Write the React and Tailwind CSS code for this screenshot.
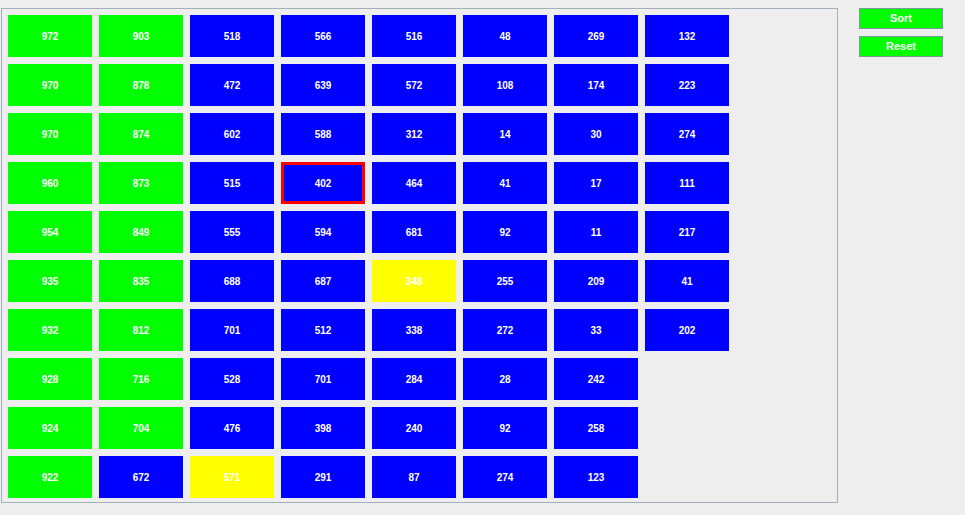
const columns = [
  [972, 970, 970, 960, 954, 935, 932, 928, 924, 922],
  [903, 878, 874, 873, 849, 835, 812, 716, 704, 672],
  [518, 472, 602, 515, 555, 688, 701, 528, 476, 571],
  [566, 639, 588, 402, 594, 687, 512, 701, 398, 291],
  [516, 572, 312, 464, 681, 348, 338, 284, 240, 87],
  [48, 108, 14, 41, 92, 255, 272, 28, 92, 274],
  [269, 174, 30, 17, 11, 209, 33, 242, 258, 123],
  [132, 223, 274, 111, 217, 41, 202],
];

const SORTED_COUNT = 19;
const COMPARED = [29, 45];
const PIVOT = 33;

function cellColor(index) {
  if (COMPARED.includes(index)) return "bg-[#ffff00]";
  if (index < SORTED_COUNT) return "bg-[#00ff00]";
  return "bg-[#0000ff]";
}

function NumberCell({ value, index }) {
  const border = index === PIVOT ? "border-3 border-[#ff0000]" : "";
  return (
    <button
      type="button"
      className={`flex h-[42px] w-full items-center justify-center pt-0.5 text-[10px] leading-3 font-bold text-white ${cellColor(index)} ${border}`}
    >
      {value}
    </button>
  );
}

function ActionButton({ children }) {
  return (
    <button
      type="button"
      className="flex h-[21px] w-full items-center justify-center border border-[#7a9a99] bg-[#00ff00] pb-0.5 text-[11px] leading-3 font-bold text-white"
    >
      {children}
    </button>
  );
}

export default function App() {
  return (
    <div className="flex min-h-screen items-start gap-[21px] bg-[#eeeeee] pt-2 pr-[22px] pb-2 pl-px font-['Liberation_Sans',Arial,sans-serif]">
      <main className="flex min-w-0 flex-1 gap-[7px] border border-[#a3b0bc] px-1.5 pt-1.5 pb-1">
        {columns.map((column, c) => (
          <div key={c} className="flex w-[84px] flex-col gap-[7px]">
            {column.map((value, r) => (
              <NumberCell key={r} value={value} index={c * 10 + r} />
            ))}
          </div>
        ))}
      </main>
      <aside className="flex w-[84px] shrink-0 flex-col gap-[7px]">
        <ActionButton>Sort</ActionButton>
        <ActionButton>Reset</ActionButton>
      </aside>
    </div>
  );
}
